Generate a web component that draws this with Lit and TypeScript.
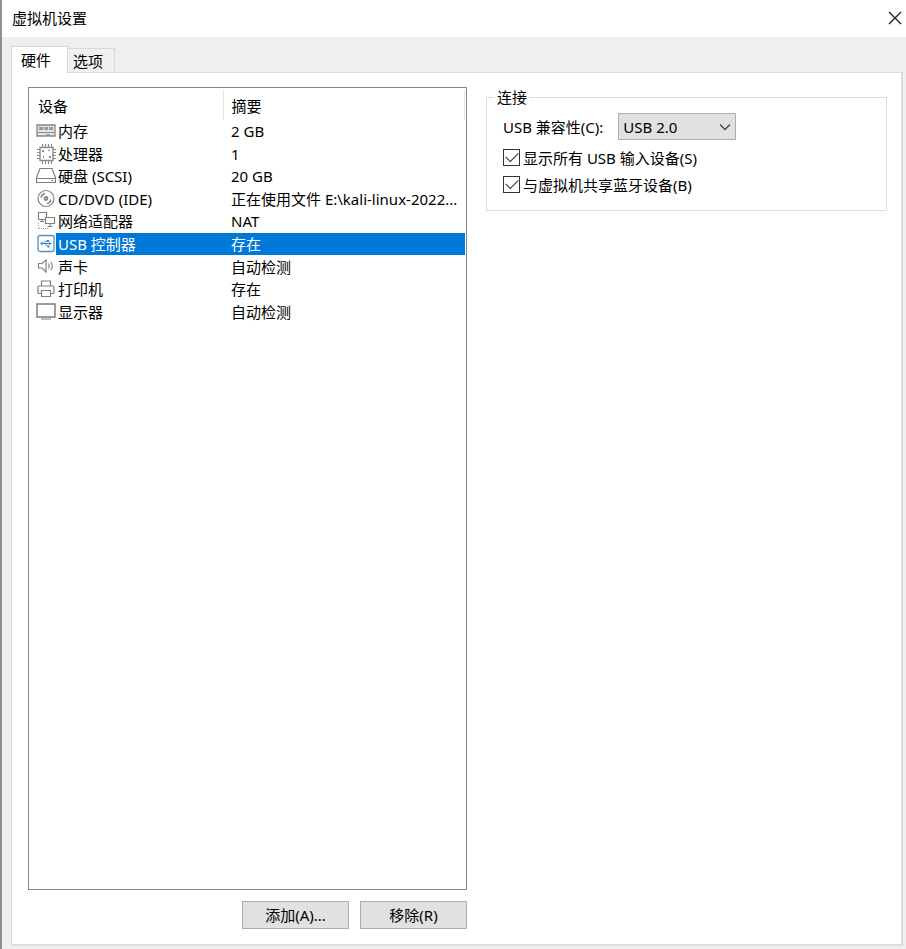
import { LitElement, html, css, svg } from "lit";
import { customElement, state } from "lit/decorators.js";
import { classMap } from "lit/directives/class-map.js";

const icons: Record<string, unknown> = {
  memory: svg`<path d="M1 4h18v11h-6v-1h-2v1H1z" fill="#e4e4e4" stroke="#858585" stroke-width="1.3"/><path d="M3 6h4v3H3zM8 6h4v3H8zM13 6h4v3h-4z" fill="#999"/><path d="M2 11.5h16" stroke="#8a8a8a"/>`,
  cpu: svg`<g fill="none" stroke="#8a8a8a"><rect x="4" y="3.5" width="13" height="13" stroke-width="1.4"/><path d="M6.5 0v3M9.5 0v3M12.5 0v3M15.5 0v3M6.5 17v3M9.5 17v3M12.5 17v3M15.5 17v3M1 5.500h3M1 8.500h3M1 11.500h3M1 14.500h3M17 5.500h3M17 8.500h3M17 11.500h3M17 14.500h3" stroke-width="1.2"/></g><path d="M6 6h2v2H6zM12 6h2v1h-2zM7 12h1v2H7zM13 12h2v2h-2z" fill="#8a8a8a"/>`,
  disk: svg`<path d="M4 2.500h12l3.500 9v5H.500v-5zM.500 12.500h19" fill="#fff" stroke="#7d7d7d" stroke-width="1.2"/><path d="M15 14.500h2" stroke="#7d7d7d"/>`,
  cd: svg`<g fill="none" stroke="#858585"><circle cx="10" cy="9.500" r="8" stroke-width="1.2"/><circle cx="10" cy="9.500" r="1.500" stroke-width="1.8"/><path d="M5 8.500a5 5 0 0 1 4-4M15 10.500a5 5 0 0 1-4 4" stroke-width="1.4"/></g>`,
  network: svg`<g fill="#fff" stroke="#808080" stroke-width="1.2"><path d="M2.500 1.500h8v7h-8zM4 10.500h4M6 8.500v2"/><path d="M9.500 6.500h9v6h-9zM14 12.500v3M11.500 15.500h5"/></g><path d="M2.500 12v5.500H13" fill="none" stroke="#999" stroke-dasharray="1 1"/>`,
  usb: svg`<rect x="2" y="1.500" width="16" height="16" rx="2" fill="#fff" stroke="#4d92c4" stroke-width="1.3"/><path d="M6 9.500h7M7.500 9.500l2-2.500h2M9 9.500l2 2.500h1" fill="none" stroke="#3c88be"/><path d="M6.500 7.500v4L4 9.500zM13 8l3 1.500-3 1.500zM11 6h2v2h-2zM11.500 11.500h2v2h-2z" fill="#3c88be"/>`,
  sound: svg`<g fill="none" stroke="#858585" stroke-width="1.2"><path d="M2.500 6.500H6l4-3.500v12l-4-4H2.500z"/><path d="M12.500 6.500q1.500 2.500 0 5M15 5q2.500 4 0 8"/></g>`,
  printer: svg`<g fill="#fff" stroke="#808080" stroke-width="1.2"><path d="M5.500 7V2h9v5"/><rect x="2" y="7" width="16" height="7.500" rx="1"/><path d="M5.500 11.500h9v6h-9z"/></g>`,
  display: svg`<path d="M1 2h18v13H1z" fill="#fff" stroke="#7d7d7d" stroke-width="1.5"/><path d="M5 17h10" stroke="#7d7d7d"/>`,
};

const devices = [
  { icon: "memory", name: "内存", summary: "2 GB" },
  { icon: "cpu", name: "处理器", summary: "1" },
  { icon: "disk", name: "硬盘 (SCSI)", summary: "20 GB" },
  { icon: "cd", name: "CD/DVD (IDE)", summary: "正在使用文件 E:\\kali-linux-2022..." },
  { icon: "network", name: "网络适配器", summary: "NAT" },
  { icon: "usb", name: "USB 控制器", summary: "存在" },
  { icon: "sound", name: "声卡", summary: "自动检测" },
  { icon: "printer", name: "打印机", summary: "存在" },
  { icon: "display", name: "显示器", summary: "自动检测" },
];

@customElement("app-root")
export class AppRoot extends LitElement {
  @state() private selected = 5;

  static styles = css`
    :host {
      display: flex;
      flex-direction: column;
      box-sizing: border-box;
      min-height: 100vh;
      border-left: 2px solid #8c8f92;
      background: #efefef;
      color: #000;
      font: 15px/20px "Noto Sans", "Noto Sans CJK SC", sans-serif;
    }
    * { box-sizing: border-box; }
    button, select, input { font: inherit; color: inherit; margin: 0; }
    svg { display: block; }
    .titlebar {
      display: flex;
      align-items: center;
      justify-content: space-between;
      height: 37px;
      padding: 0 4px 2px 10px;
      background: #fff;
    }
    .title { margin: 0; font-size: 15px; font-weight: 400; }
    .close { padding: 0; border: 0; background: none; }
    .body { flex: 1; display: flex; flex-direction: column; padding: 9px 3px 3px 9px; }
    .tabs { display: flex; align-items: flex-end; }
    .tab {
      height: 24px;
      padding: 0 11px 0 5px;
      border: 1px solid #d9d9d9;
      border-width: 1px 1px 0 0;
      background: #f0f0f0;
    }
    .tab.active {
      height: 27px;
      margin-bottom: -1px;
      padding: 0 16px 0 9px;
      border-left-width: 1px;
      background: #fff;
      z-index: 1;
    }
    .panel {
      flex: 1;
      display: grid;
      grid-template-columns: 439fr 401fr;
      gap: 19px;
      padding: 14px 14px 15px 16px;
      border: 1px solid #dcdcdc;
      border-right-width: 2px;
      border-bottom-width: 2px;
      background: #fff;
    }
    .left { display: flex; flex-direction: column; gap: 11px; min-width: 0; }
    .list { flex: 1; border: 1px solid #828790; padding: 2px 1px 0 0; }
    .devices {
      width: 100%;
      height: 233px;
      table-layout: fixed;
      border-collapse: collapse;
    }
    .icon-col { width: 27px; }
    .name-col { width: 167px; }
    .heading { height: 30px; padding: 2px 0 0 9px; text-align: left; font-weight: 400; border-right: 1px solid #e5e5e5; }
    .heading.summary { padding-left: 8px; }
    td { padding: 0; line-height: 20px; white-space: nowrap; overflow: hidden; }
    .icon { padding-left: 7px; }
    .name { padding-left: 2px; }
    .summary { padding-left: 8px; }
    .selected .name, .selected .summary { background: #0078d7; color: #fff; }
    .actions { display: flex; justify-content: flex-end; gap: 11px; }
    .action {
      width: 107px;
      height: 28px;
      padding: 0;
      border: 1px solid #adadad;
      background: #e1e1e1;
    }
    .group {
      align-self: start;
      min-width: 0;
      margin: 0;
      padding: 6px 16px 12px;
      border: 1px solid #dcdcdc;
    }
    .legend { margin-left: -8px; padding: 0 2px; }
    .compat { display: flex; align-items: center; gap: 15px; margin-bottom: 4px; }
    .picker { position: relative; }
    .select {
      appearance: none;
      display: block;
      width: 118px;
      height: 27px;
      padding: 0 24px 0 4px;
      border: 1px solid #adadad;
      border-radius: 0;
      background: #e1e1e1;
    }
    .arrow { position: absolute; right: 4px; top: 9px; pointer-events: none; }
    .option { display: flex; align-items: center; gap: 3px; height: 27px; }
    .check {
      appearance: none;
      display: grid;
      place-items: center;
      width: 17px;
      height: 17px;
      border: 1px solid #333;
      background: #fff;
    }
    .check:checked::before {
      content: "";
      width: 11px;
      height: 6px;
      margin-bottom: 4px;
      border: solid #333;
      border-width: 0 0 1px 1px;
      transform: rotate(-45deg);
    }
  `;

  render() {
    return html`
      <header class="titlebar">
        <h1 class="title">虚拟机设置</h1>
        <button class="close" aria-label="关闭">
          <svg width="14" height="14" viewBox="0 0 14 14"><path d="M1 1l12 12M13 1L1 13" stroke="#222" stroke-width="1.4" /></svg>
        </button>
      </header>
      <main class="body">
        <div class="tabs" role="tablist">
          <button class="tab active" role="tab" aria-selected="true">硬件</button>
          <button class="tab" role="tab" aria-selected="false">选项</button>
        </div>
        <section class="panel">
          <div class="left">
            <div class="list">
              <table class="devices">
                <colgroup><col class="icon-col" /><col class="name-col" /><col /></colgroup>
                <thead>
                  <tr><th class="heading" colspan="2">设备</th><th class="heading summary">摘要</th></tr>
                </thead>
                <tbody>
                  ${devices.map((d, i) => html`
                    <tr class=${classMap({ selected: i === this.selected })} @click=${() => (this.selected = i)}>
                      <td class="icon"><svg width="20" height="20" viewBox="0 0 20 20">${icons[d.icon]}</svg></td>
                      <td class="name">${d.name}</td>
                      <td class="summary">${d.summary}</td>
                    </tr>`)}
                </tbody>
              </table>
            </div>
            <div class="actions">
              <button class="action">添加(A)...</button>
              <button class="action">移除(R)</button>
            </div>
          </div>
          <fieldset class="group">
            <legend class="legend">连接</legend>
            <div class="compat">
              <label for="compat">USB 兼容性(C):</label>
              <span class="picker">
                <select class="select" id="compat"><option>USB 2.0</option></select>
                <svg class="arrow" width="14" height="10" viewBox="0 0 14 10"><path d="M2 2.500l5 5 5-5" fill="none" stroke="#444" stroke-width="1.300" /></svg>
              </span>
            </div>
            <label class="option"><input class="check" type="checkbox" checked />显示所有 USB 输入设备(S)</label>
            <label class="option"><input class="check" type="checkbox" checked />与虚拟机共享蓝牙设备(B)</label>
          </fieldset>
        </section>
      </main>
    `;
  }
}
